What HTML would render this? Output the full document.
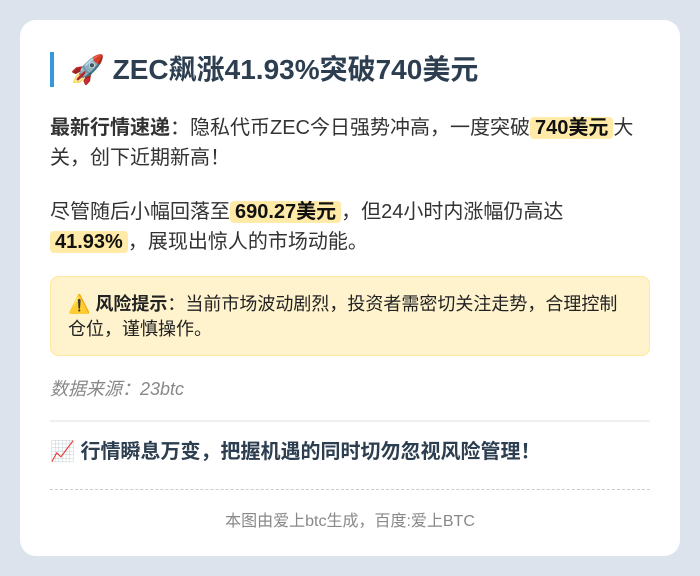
<!DOCTYPE html>
<html><head><meta charset="utf-8"><style>
*{margin:0;padding:0;box-sizing:border-box}
body{width:700px;height:576px;background:#dde3ed;font-family:"Liberation Sans","Noto Sans CJK SC",sans-serif;color:#333;overflow:hidden}
.card{position:absolute;left:20px;top:20px;width:660px;height:536px;background:#fff;border-radius:16px;padding:0 30px}
h1{position:absolute;left:30px;top:32px;height:35px;border-left:4px solid #3498db;padding-left:16px;font-size:28px;line-height:35px;color:#2c3e50;font-weight:bold;white-space:nowrap}
p{font-size:20px;line-height:30px;position:absolute;left:30px;width:600px}
.hl{background:#ffeaa7;border-radius:4px;padding:0 5px;font-weight:bold;color:#111}
.warn{position:absolute;left:30px;top:256px;width:600px;height:80px;background:#fff3cd;border:1px solid #ffe8a1;border-radius:8px;padding:15px 17px;font-size:18px;line-height:25px;color:#222}
.src{position:absolute;left:30px;top:355px;font-size:18px;font-style:italic;color:#888}
.hr{position:absolute;left:30px;top:400px;width:600px;border-top:2px solid #eef0f2}
.tip{position:absolute;left:30px;top:418px;font-size:20px;font-weight:bold;color:#2c3e50;line-height:28px}
.dash{position:absolute;left:30px;top:469px;width:600px;border-top:1px dashed #ccc}
.foot{position:absolute;left:30px;width:600px;top:487px;text-align:center;font-size:16px;color:#888}
</style></head><body><div class="card">
<h1>🚀 ZEC飙涨41.93%突破740美元</h1>
<p style="top:93px"><b>最新行情速递</b>：隐私代币ZEC今日强势冲高，一度突破<span class="hl">740美元</span>大关，创下近期新高！</p>
<p style="top:177px">尽管随后小幅回落至<span class="hl">690.27美元</span>，但24小时内涨幅仍高达<span class="hl">41.93%</span>，展现出惊人的市场动能。</p>
<div class="warn">⚠️ <b>风险提示</b>：当前市场波动剧烈，投资者需密切关注走势，合理控制仓位，谨慎操作。</div>
<div class="src">数据来源：23btc</div>
<div class="hr"></div>
<div class="tip">📈 行情瞬息万变，把握机遇的同时切勿忽视风险管理！</div>
<div class="dash"></div>
<div class="foot">本图由爱上btc生成，百度:爱上BTC</div>
</div></body></html>
